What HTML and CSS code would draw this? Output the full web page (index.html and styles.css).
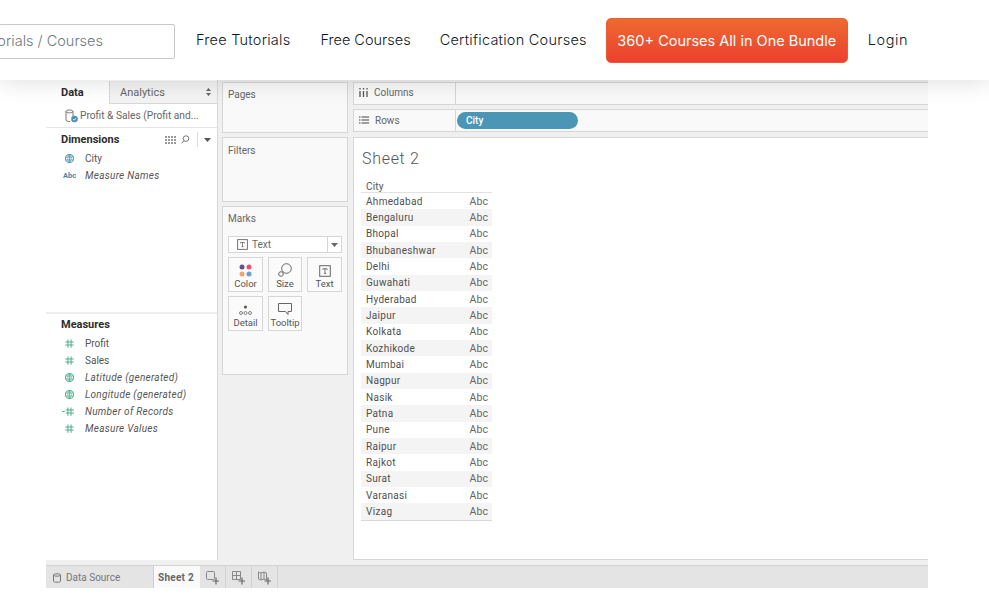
FILE: index.html
```html
<!DOCTYPE html>
<html lang="en">
<head>
<meta charset="utf-8">
<title>Tableau Tutorial</title>
<link rel="stylesheet" href="styles.css">
</head>
<body>
<svg class="defs" width="0" height="0" aria-hidden="true">
  <symbol id="globe" viewBox="0 0 12 12"><circle cx="6" cy="6" r="4.4" fill="none" stroke="currentColor" stroke-width="1.1"/><path d="M1.6 4.4h8.8M1.6 7.6h8.8M6 1.6v8.8M6 1.6C3.6 4 3.6 8 6 10.4M6 1.6C8.4 4 8.4 8 6 10.4" fill="none" stroke="currentColor" stroke-width=".8"/></symbol>
  <symbol id="hash" viewBox="0 0 12 12"><path d="M4.300 1.500v9M7.700 1.500v9M1.500 4.400h9M1.500 7.600h9" fill="none" stroke="currentColor" stroke-width="1.100"/></symbol>
  <symbol id="hashdash" viewBox="0 0 14 12"><path d="M6.300 1.500v9M9.700 1.500v9M4 4.400h9M4 7.600h9M0 6h3" fill="none" stroke="currentColor" stroke-width="1.100"/></symbol>
  <symbol id="tbox" viewBox="0 0 12 12"><rect x=".7" y=".7" width="10.600" height="10.600" fill="none" stroke="#666" stroke-width="1"/><path d="M3.800 3.800h4.400M6 3.800v4.600M5 8.400h2M3.800 3.800v1M8.200 3.800v1" fill="none" stroke="#555" stroke-width=".8"/></symbol>
</svg>

<header class="topbar">
  <div class="search"><span class="search-text">Search Tutorials / Courses</span></div>
  <nav class="nav">
    <a class="nav-link link-tutorials">Free Tutorials</a>
    <a class="nav-link link-courses">Free Courses</a>
    <a class="nav-link link-cert">Certification Courses</a>
    <a class="cta">360+ Courses All in One Bundle</a>
    <a class="nav-link link-login">Login</a>
  </nav>
</header>

<main class="app">
  <div class="workspace">
    <aside class="data-pane">
      <div class="tabs">
        <div class="tab tab-active">Data</div>
        <div class="tab tab-idle"><span>Analytics</span><svg class="updown" width="5" height="8" viewBox="0 0 5 8"><path d="M2.500 0L5 3H0zM2.500 8L0 5h5z" fill="#666"/></svg></div>
      </div>
      <div class="source">
        <svg width="15" height="15" viewBox="0 0 15 15"><path d="M2 3.500C2 1.500 9 1.500 9 3.500V8M2 3.500V12c0 1 1.500 1.500 4 1.500M2 3.500c0 1.800 7 1.800 7 0" fill="none" stroke="#777" stroke-width="1"/><circle cx="10.500" cy="11" r="3.300" fill="#4a90b8"/><path d="M9 11l1.200 1.200L12 10" fill="none" stroke="#fff" stroke-width=".8"/></svg>
        <span>Profit &amp; Sales (Profit and...</span>
      </div>
      <section class="dims">
        <div class="section-head">
          <span>Dimensions</span>
          <div class="head-tools">
            <svg width="11" height="8" viewBox="0 0 11 8"><path d="M0 1h11M0 4h11M0 7h11" stroke="#777" stroke-width="1.400" stroke-dasharray="2 1"/></svg>
            <svg width="9" height="9" viewBox="0 0 9 9"><circle cx="5" cy="3.600" r="2.800" fill="none" stroke="#777"/><path d="M3 5.600L.7 8.400" stroke="#777"/></svg>
            <i class="tool-sep"></i>
            <svg width="7" height="4" viewBox="0 0 7 4"><path d="M0 0h7L3.500 4z" fill="#555"/></svg>
          </div>
        </div>
        <div class="field"><svg class="ficon blue" width="11" height="11"><use href="#globe"/></svg><span>City</span></div>
        <div class="field em"><span class="abc">Abc</span><span>Measure Names</span></div>
      </section>
      <section class="meas">
        <div class="section-head"><span>Measures</span></div>
        <div class="field"><svg class="ficon green" width="11" height="11"><use href="#hash"/></svg><span>Profit</span></div>
        <div class="field"><svg class="ficon green" width="11" height="11"><use href="#hash"/></svg><span>Sales</span></div>
        <div class="field em"><svg class="ficon green" width="11" height="11"><use href="#globe"/></svg><span>Latitude (generated)</span></div>
        <div class="field em"><svg class="ficon green" width="11" height="11"><use href="#globe"/></svg><span>Longitude (generated)</span></div>
        <div class="field em"><svg class="ficon green wide" width="13" height="11"><use href="#hashdash"/></svg><span>Number of Records</span></div>
        <div class="field em"><svg class="ficon green" width="11" height="11"><use href="#hash"/></svg><span>Measure Values</span></div>
      </section>
    </aside>

    <div class="cards">
      <section class="card card-pages"><h3 class="card-title">Pages</h3></section>
      <section class="card card-filters"><h3 class="card-title">Filters</h3></section>
      <section class="card card-marks">
        <h3 class="card-title">Marks</h3>
        <div class="mark-select">
          <svg width="11" height="11"><use href="#tbox"/></svg><span>Text</span>
          <i class="select-arrow"><svg width="7" height="4" viewBox="0 0 7 4"><path d="M0 0h7L3.500 4z" fill="#666"/></svg></i>
        </div>
        <div class="mark-grid">
          <div class="mark-btn"><svg width="13" height="13" viewBox="0 0 13 13"><circle cx="3" cy="3" r="2.500" fill="#6b4f8a"/><circle cx="10" cy="3" r="2.500" fill="#e8556a"/><circle cx="3" cy="10" r="2.500" fill="#f0a66c"/><circle cx="10" cy="10" r="2.500" fill="#6f9fd0"/></svg><span>Color</span></div>
          <div class="mark-btn"><svg width="14" height="14" viewBox="0 0 14 14"><circle cx="8.500" cy="5.500" r="4.800" fill="none" stroke="#666"/><circle cx="3" cy="11" r="2.300" fill="#f9f9f9" stroke="#666"/></svg><span>Size</span></div>
          <div class="mark-btn"><svg width="12" height="12"><use href="#tbox"/></svg><span>Text</span></div>
          <div class="mark-btn"><svg width="13" height="12" viewBox="0 0 13 12"><circle cx="6.500" cy="3" r="1.600" fill="#555"/><g fill="none" stroke="#666" stroke-width=".8"><circle cx="2" cy="9" r="1.500"/><circle cx="6.500" cy="9" r="1.500"/><circle cx="11" cy="9" r="1.500"/></g></svg><span>Detail</span></div>
          <div class="mark-btn"><svg width="14" height="13" viewBox="0 0 14 13"><path d="M.5.500h13v8H10v3L7.500 8.500H.5z" fill="none" stroke="#666"/></svg><span>Tooltip</span></div>
        </div>
      </section>
    </div>

    <div class="canvas-col">
      <div class="shelf">
        <div class="shelf-label"><svg width="9" height="9" viewBox="0 0 9 9"><path d="M1 3v6M4.500 3v6M8 3v6M1 0v1.500M4.500 0v1.500M8 0v1.500" stroke="#555" stroke-width="1.300"/></svg><span>Columns</span></div>
        <div class="shelf-drop"></div>
      </div>
      <div class="shelf">
        <div class="shelf-label"><svg width="10" height="8" viewBox="0 0 10 8"><path d="M2.500 1H10M2.500 4H10M2.500 7H10M0 1h1.500M0 4h1.500M0 7h1.500" stroke="#444" stroke-width="1.100"/></svg><span>Rows</span></div>
        <div class="shelf-drop"><span class="pill">City</span></div>
      </div>
      <section class="sheet">
        <h2 class="sheet-title">Sheet 2</h2>
        <div class="table">
          <div class="table-head">City</div>
          <div class="row"><span>Ahmedabad</span><span class="abc-cell">Abc</span></div>
          <div class="row"><span>Bengaluru</span><span class="abc-cell">Abc</span></div>
          <div class="row"><span>Bhopal</span><span class="abc-cell">Abc</span></div>
          <div class="row"><span>Bhubaneshwar</span><span class="abc-cell">Abc</span></div>
          <div class="row"><span>Delhi</span><span class="abc-cell">Abc</span></div>
          <div class="row"><span>Guwahati</span><span class="abc-cell">Abc</span></div>
          <div class="row"><span>Hyderabad</span><span class="abc-cell">Abc</span></div>
          <div class="row"><span>Jaipur</span><span class="abc-cell">Abc</span></div>
          <div class="row"><span>Kolkata</span><span class="abc-cell">Abc</span></div>
          <div class="row"><span>Kozhikode</span><span class="abc-cell">Abc</span></div>
          <div class="row"><span>Mumbai</span><span class="abc-cell">Abc</span></div>
          <div class="row"><span>Nagpur</span><span class="abc-cell">Abc</span></div>
          <div class="row"><span>Nasik</span><span class="abc-cell">Abc</span></div>
          <div class="row"><span>Patna</span><span class="abc-cell">Abc</span></div>
          <div class="row"><span>Pune</span><span class="abc-cell">Abc</span></div>
          <div class="row"><span>Raipur</span><span class="abc-cell">Abc</span></div>
          <div class="row"><span>Rajkot</span><span class="abc-cell">Abc</span></div>
          <div class="row"><span>Surat</span><span class="abc-cell">Abc</span></div>
          <div class="row"><span>Varanasi</span><span class="abc-cell">Abc</span></div>
          <div class="row"><span>Vizag</span><span class="abc-cell">Abc</span></div>
        </div>
      </section>
    </div>
  </div>

  <footer class="sheetbar">
    <div class="ds-tab">
      <svg width="8" height="10" viewBox="0 0 8 10"><path d="M.5 2C.5.300 7.500.300 7.500 2v6c0 1.700-7 1.700-7 0zM.5 2c0 1.500 7 1.500 7 0" fill="none" stroke="#777"/></svg>
      <span>Data Source</span>
    </div>
    <div class="sheet-tab">Sheet 2</div>
    <div class="add-tab"><svg width="13" height="14" viewBox="0 0 13 14"><rect x=".5" y=".5" width="8" height="8" rx="1" fill="none" stroke="#888"/><path d="M10 6.500v7M6.500 10h6.500" stroke="#666" stroke-width="1.200"/></svg></div>
    <div class="add-tab"><svg width="13" height="14" viewBox="0 0 13 14"><path d="M.5.500h8v8h-8zM.5 4.500h8M4.500 .500v8" fill="none" stroke="#888"/><path d="M10 6.500v7M6.500 10h6.500" stroke="#666" stroke-width="1.200"/></svg></div>
    <div class="add-tab"><svg width="13" height="14" viewBox="0 0 13 14"><path d="M.5 1l2.500 1 3-1 2.500 1v7l-2.500-1-3 1-2.500-1zM3 2v7M6 1v7" fill="none" stroke="#888"/><path d="M10 6.500v7M6.500 10h6.500" stroke="#666" stroke-width="1.200"/></svg></div>
  </footer>
</main>
</body>
</html>
```

FILE: styles.css
```css
* { box-sizing: border-box; }

html, body {
  margin: 0;
  height: 100%;
  overflow: hidden;
  background: #fff;
}

body {
  font-family: "Roboto", "Liberation Sans", sans-serif;
  color: #555;
}

.defs { display: block; height: 0; }

/* Site header */
.topbar {
  position: relative;
  z-index: 2;
  height: 80px;
  background: #fff;
  box-shadow: 0 2px 22px rgba(0, 0, 0, .13);
  display: flex;
  align-items: center;
  font-family: "Inter", "Liberation Sans", sans-serif;
  font-weight: 300;
}

.search {
  width: 176px;
  height: 35px;
  margin-left: -1px;
  margin-top: 2px;
  border: 1px solid #c8c8c8;
  border-radius: 2px;
  display: flex;
  justify-content: flex-end;
  align-items: center;
  padding: 0 71px 2px 0;
  overflow: hidden;
  white-space: nowrap;
  font-size: 14.500px;
  color: #6f787f;
}

.search-text { flex: none; }

.nav {
  display: flex;
  align-items: center;
  margin-left: 21px;
  margin-top: -1px;
}

.nav-link {
  font-size: 14.500px;
  color: #10181f;
  white-space: nowrap;
}

.link-tutorials {
  letter-spacing: .25px;
  margin-right: 30px;
}

.link-courses { margin-right: 29px; }

.link-cert {
  letter-spacing: .25px;
  margin-right: 19px;
}

.link-login { letter-spacing: .6px; }

.cta {
  flex: none;
  width: 242px;
  height: 45px;
  margin: 1px 20px 0 0;
  border: 1px solid #ee5a32;
  border-radius: 5px;
  background: linear-gradient(#ee6a30, #ec402f);
  color: #fff;
  font-size: 14.500px;
  font-weight: 400;
  display: flex;
  align-items: center;
  justify-content: center;
  white-space: nowrap;
}

/* Embedded Tableau screenshot */
.app {
  width: 882px;
  height: 508px;
  margin-left: 46px;
  background: #f0f0f0;
  display: flex;
  flex-direction: column;
  font-size: 10px;
}

.workspace {
  flex: 1;
  min-height: 0;
  display: flex;
}

.data-pane {
  width: 172px;
  background: #fff;
  border-right: 1px solid #d8d8d8;
  display: flex;
  flex-direction: column;
  margin-right: 4px;
}

.tabs {
  height: 24px;
  padding-top: 1px;
  display: flex;
  font-size: 11px;
}

.tab { display: flex; align-items: center; }

.tab-active {
  width: 63px;
  padding-left: 15px;
  font-weight: 700;
  color: #2e2e2e;
  background: #fff;
}

.tab-idle {
  flex: 1;
  padding: 0 6px 0 10px;
  justify-content: space-between;
  color: #666;
  background: #f3f3f3;
  border-left: 1px solid #d8d8d8;
  border-bottom: 1px solid #d8d8d8;
}

.source {
  height: 24px;
  padding-left: 18px;
  display: flex;
  align-items: center;
  gap: 1px;
  color: #666;
  font-size: 10.200px;
  border-bottom: 1px solid #e4e4e4;
  white-space: nowrap;
}

.dims {
  height: 186px;
  border-bottom: 2px solid #eee;
  padding-top: 3px;
}

.section-head {
  height: 17px;
  padding: 0 6px 0 15px;
  display: flex;
  align-items: center;
  justify-content: space-between;
  font-size: 11px;
  font-weight: 700;
  color: #2e2e2e;
  margin-bottom: 2px;
}

.head-tools {
  display: flex;
  align-items: center;
  gap: 5px;
}

.tool-sep {
  width: 1px;
  height: 15px;
  background: #ddd;
  margin: 0 1px 0 2px;
}

.field {
  height: 17px;
  padding-left: 18px;
  display: flex;
  align-items: center;
  gap: 10px;
  color: #555;
  font-size: 10px;
  white-space: nowrap;
}

.em {
  font-style: italic;
  letter-spacing: .28px;
}

.ficon { flex: none; }
.ficon.wide { margin-left: -2px; }
.blue { color: #4d92b3; }
.green { color: #4fae8a; }

.abc {
  width: 13px;
  margin-left: -1px;
  margin-right: -1px;
  font-size: 7.500px;
  font-style: normal;
  font-weight: 700;
  letter-spacing: 0;
  color: #4d82a3;
}

.meas { padding-top: 2px; }

/* Pages, Filters, Marks */
.cards {
  width: 126px;
  padding-top: 2px;
  margin-right: 5px;
  display: flex;
  flex-direction: column;
  gap: 4px;
}

.card {
  background: #f9f9f9;
  border: 1px solid #d6d6d6;
  padding: 6px 5px;
}

.card-title {
  margin: 0;
  font-size: 10px;
  font-weight: 400;
  color: #666;
}

.card-pages { height: 51px; }
.card-filters { height: 65px; padding-top: 7px; }
.card-marks { height: 169px; }

.mark-select {
  height: 17px;
  margin-top: 12px;
  background: #fff;
  border: 1px solid #d6d6d6;
  padding-left: 8px;
  display: flex;
  align-items: center;
  gap: 4px;
  color: #666;
}

.select-arrow {
  margin-left: auto;
  width: 14px;
  height: 100%;
  border-left: 1px solid #d6d6d6;
  display: flex;
  align-items: center;
  justify-content: center;
}

.mark-grid {
  display: grid;
  grid-template-columns: 35px 34px 35px;
  justify-content: space-between;
  grid-auto-rows: 35px;
  row-gap: 4px;
  margin-top: 4px;
}

.mark-btn {
  background: #fbfbfb;
  border: 1px solid #d6d6d6;
  display: flex;
  flex-direction: column;
  align-items: center;
  justify-content: flex-end;
  gap: 1px;
  padding-bottom: 2px;
  font-size: 9.500px;
  color: #555;
  white-space: nowrap;
}

/* Shelves + view */
.canvas-col {
  flex: 1;
  min-width: 0;
  padding-top: 2px;
  display: flex;
  flex-direction: column;
  gap: 4px;
}

.shelf {
  height: 23px;
  background: #f9f9f9;
  border-top: 1px solid #d6d6d6;
  border-bottom: 1px solid #d6d6d6;
  border-left: 1px solid #d6d6d6;
  display: flex;
}

.shelf-label {
  width: 102px;
  padding-left: 5px;
  border-right: 1px solid #d6d6d6;
  display: flex;
  align-items: center;
  gap: 6px;
  color: #666;
}

.shelf:first-child .shelf-label { padding-bottom: 1px; }

.shelf-drop {
  flex: 1;
  display: flex;
  align-items: center;
  padding-left: 1px;
}

.pill {
  width: 121px;
  height: 17px;
  border-radius: 9px;
  background: #4b96b5;
  color: #fff;
  font-weight: 500;
  padding-left: 9px;
  display: flex;
  align-items: center;
}

.sheet {
  height: 424px;
  margin-top: 1px;
  background: #fff;
  border: 1px solid #d6d6d6;
  border-right: 0;
  padding: 11px 0 0 7px;
}

.sheet-title {
  margin: 0 0 0 1px;
  font-size: 16px;
  font-weight: 300;
  line-height: 19px;
  color: #555;
  letter-spacing: .7px;
}

.table {
  width: 131px;
  margin-top: 9px;
  border-bottom: 1px solid #d8d8d8;
  font-size: 10px;
  color: #4f4f4f;
}

.table-head {
  height: 16px;
  padding: 4px 0 0 5px;
  border-bottom: 1px solid #e2e2e2;
  color: #555;
  letter-spacing: .2px;
}

.row {
  height: 16.350px;
  padding: 0 4px 0 5px;
  display: flex;
  align-items: center;
  justify-content: space-between;
  letter-spacing: .3px;
}

.row:nth-child(odd) { background: #f4f4f4; }

.abc-cell {
  font-size: 10.500px;
  letter-spacing: .1px;
  color: #666;
}

/* Sheet tabs */
.sheetbar {
  height: 23px;
  margin-top: 5px;
  background: #e4e4e4;
  border-top: 1px solid #d2d2d2;
  display: flex;
}

.ds-tab {
  width: 107px;
  padding: 1px 0 0 7px;
  display: flex;
  align-items: center;
  gap: 5px;
  color: #777;
}

.sheet-tab {
  width: 47px;
  background: #fafafa;
  border-left: 1px solid #cfcfcf;
  padding-left: 4px;
  font-weight: 700;
  letter-spacing: .25px;
  color: #666;
  display: flex;
  align-items: center;
}

.add-tab {
  width: 26px;
  border-right: 1px solid #d2d2d2;
  display: flex;
  align-items: center;
  justify-content: center;
  padding-top: 2px;
}
```
